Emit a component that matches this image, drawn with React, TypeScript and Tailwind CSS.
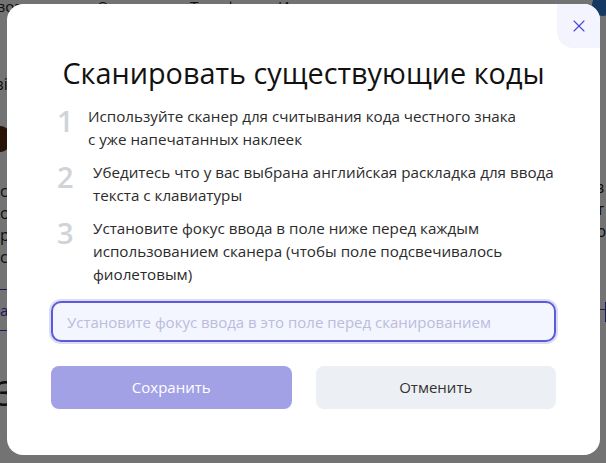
import { X } from "lucide-react";

const steps = [
  {
    n: "1",
    numClass: "w-[31px]",
    lines: ["Используйте сканер для считывания кода честного знака", "с уже напечатанных наклеек"],
  },
  {
    n: "2",
    numClass: "w-[36px]",
    lines: ["Убедитесь что у вас выбрана английская раскладка для ввода", "текста с клавиатуры"],
  },
  {
    n: "3",
    numClass: "w-[36px]",
    lines: ["Установите фокус ввода в поле ниже перед каждым", "использованием сканера (чтобы поле подсвечивалось", "фиолетовым)"],
  },
];

function Backdrop() {
  return (
    <div className="absolute inset-0 bg-white text-[#222] font-['Open_Sans',sans-serif]">
      <div className="relative -mt-[6px] h-[24px] text-[15px] leading-[24px]">
        <span className="absolute left-[-2px]">зоваться</span>
        <span className="absolute left-[97px]">Отзывы</span>
        <span className="absolute left-[190px]">Тарифы</span>
        <span className="absolute left-[278px]">Инструменты ⌄</span>
      </div>
      <div className="absolute right-[-8px] top-[-6px] h-[22px] w-[22px] rounded-full bg-[#2f7fd6]" />
      <div className="absolute left-[-4px] top-[72px] text-[16px]">зі</div>
      <div className="absolute left-[-14px] top-[126px] h-[26px] w-[26px] rounded-full bg-[#5a2a10]" />
      <div className="absolute left-0 top-[180px] flex flex-col text-[16px] leading-[22px]">
        <span>с</span>
        <span>о</span>
        <span>р</span>
        <span>с</span>
      </div>
      <div className="absolute left-0 top-[289px] h-px w-[20px] bg-[#3b3bd0]" />
      <div className="absolute left-0 top-[299px] text-[15px] text-[#3b3bd0]">а</div>
      <div className="absolute left-0 top-[330px] h-px w-[20px] bg-[#3b3bd0]" />
      <div className="absolute left-[-4px] top-[368px] text-[34px]">З</div>
      <div className="absolute right-0 top-[176px] flex flex-col text-[16px] leading-[22px]">
        <span>з</span>
        <span>т</span>
        <span>о</span>
      </div>
      <div className="absolute right-0 top-[302px] h-[20px] w-px bg-[#3b3bd0]" />
      <div className="absolute right-0 top-[309px] h-px w-[6px] bg-[#3b3bd0]" />
    </div>
  );
}

export default function App() {
  return (
    <div className="relative h-[463px] w-[606px] overflow-hidden">
      <Backdrop />
      <div className="absolute inset-0 bg-black/55" />
      <div className="absolute left-[7px] top-[4px] flex h-[451px] w-[593px] flex-col rounded-[16px] bg-white px-[44px] font-['Open_Sans',sans-serif]">
        <button className="absolute right-0 top-0 flex h-[44px] w-[43px] items-center justify-center rounded-tr-[16px] rounded-bl-[16px] bg-[#f3f4fe] text-[#4646d2]">
          <X size={20} strokeWidth={1.3} />
        </button>
        <h2 className="mt-[50px] text-center text-[28.8px] leading-[37px] text-[#111]">
          Сканировать существующие коды
        </h2>
        <ul className="mt-[14px] flex flex-col gap-[10px] pl-[6px]">
          {steps.map((s) => (
            <li key={s.n} className="flex items-start">
              <span className={`${s.numClass} shrink-0 pt-[1px] text-[29px] font-semibold leading-[29px] text-[#d0d3d9]`}>
                {s.n}
              </span>
              <p className="text-[15.2px] leading-[23px] text-[#2b2b2b]">
                {s.lines.map((l, i) => (
                  <span key={i} className="block">
                    {l}
                  </span>
                ))}
              </p>
            </li>
          ))}
        </ul>
        <input
          className="mt-[15px] h-[41px] w-full rounded-[10px] border-2 border-[#5b5bd8] bg-[#f3f5ff] px-[14px] text-[15px] text-[#333] shadow-[0_0_0_2px_#dcdcf6] outline-none placeholder:text-[#bcbcdc]"
          placeholder="Установите фокус ввода в это поле перед сканированием"
        />
        <div className="mt-[24px] grid grid-cols-2 gap-[24px]">
          <button className="h-[43px] rounded-[8px] bg-[#a3a1e6] text-[15px] text-white">Сохранить</button>
          <button className="h-[43px] rounded-[8px] bg-[#eceff3] text-[15px] text-[#333]">Отменить</button>
        </div>
      </div>
    </div>
  );
}
